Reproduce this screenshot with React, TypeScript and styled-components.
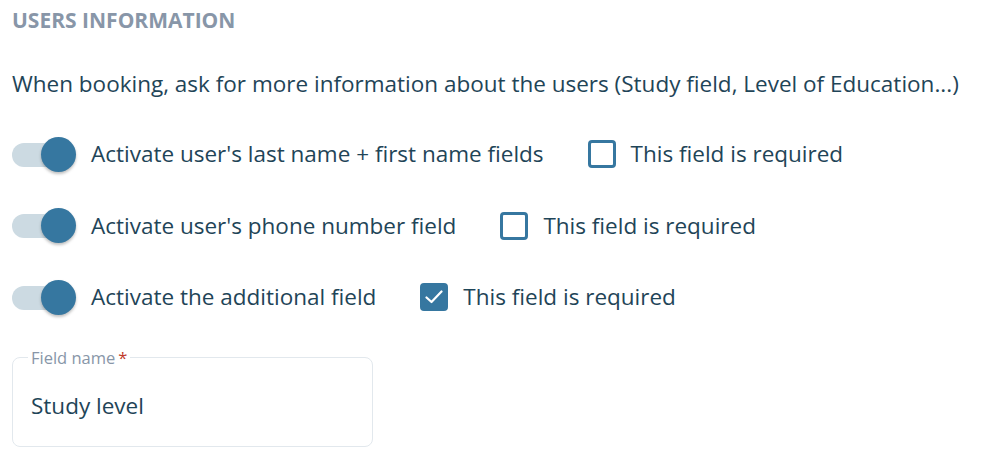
import React, { useState } from 'react';
import styled, { createGlobalStyle } from 'styled-components';

const TEXT = '#1f4558';
const MUTED = '#8896a8';
const BLUE = '#3677a0';
const TRACK = '#ccdae2';

const GlobalStyle = createGlobalStyle`
  body {
    margin: 0;
    background: #ffffff;
    font-family: 'Open Sans', 'Noto Sans', sans-serif;
    color: ${TEXT};
  }
`;

const Page = styled.div`
  display: flex;
  flex-direction: column;
  padding: 6px 12px;
`;

const Title = styled.h2`
  margin: 0;
  font-size: 21px;
  font-weight: 700;
  color: ${MUTED};
  line-height: 28px;
`;

const Description = styled.p`
  margin: 35px 0 0;
  font-size: 22.5px;
  line-height: 30px;
`;

const Options = styled.div`
  display: flex;
  flex-direction: column;
  gap: 36.5px;
  margin-top: 37.5px;
`;

const Row = styled.div`
  display: flex;
  align-items: center;
  height: 35px;
`;

const SwitchButton = styled.button<{ on: boolean }>`
  position: relative;
  width: 64px;
  height: 35px;
  padding: 0;
  border: none;
  background: none;
  cursor: pointer;
  flex-shrink: 0;
  &::before {
    content: '';
    position: absolute;
    left: 0;
    top: 6px;
    width: 58px;
    height: 24px;
    border-radius: 12px;
    background: ${TRACK};
  }
  &::after {
    content: '';
    position: absolute;
    top: 0;
    left: ${({ on }) => (on ? '29px' : '0')};
    width: 35px;
    height: 35px;
    border-radius: 50%;
    background: ${({ on }) => (on ? BLUE : '#f4f6f8')};
    box-shadow: 0 2px 3px rgba(0, 0, 0, 0.25);
  }
`;

const Label = styled.span<{ gap?: number }>`
  margin-left: ${({ gap }) => gap ?? 15}px;
  font-size: 22.5px;
  line-height: 30px;
`;

const Check = styled.span<{ checked: boolean }>`
  display: flex;
  align-items: center;
  justify-content: center;
  box-sizing: border-box;
  width: 28px;
  height: 28px;
  margin-left: 44px;
  border: 3px solid ${BLUE};
  border-radius: 4px;
  background: ${({ checked }) => (checked ? BLUE : '#fff')};
  cursor: pointer;
  flex-shrink: 0;
`;

const Field = styled.fieldset`
  box-sizing: border-box;
  width: 361px;
  height: 99px;
  margin: 33px 0 0;
  padding: 0 18px;
  border: 1px solid #e2e8ed;
  border-radius: 8px;
`;

const Legend = styled.legend`
  padding: 0 3px;
  margin-left: -3px;
  font-size: 16.5px;
  color: ${MUTED};
  line-height: 19px;
`;

const Required = styled.span`
  color: #c0392b;
  margin-left: 3px;
`;

const Input = styled.input`
  margin-top: 24px;
  width: 100%;
  border: none;
  outline: none;
  padding: 0;
  font-family: inherit;
  font-size: 22.5px;
  line-height: 30px;
  color: ${TEXT};
  background: transparent;
`;

const CheckMark = () => (
  <svg width="18" height="14" viewBox="0 0 18 14" fill="none">
    <path d="M1.5 7.5 L6.5 12 L16.5 1.5" stroke="#fff" strokeWidth="2.2" strokeLinecap="round" strokeLinejoin="round" />
  </svg>
);

interface Option {
  label: string;
  on: boolean;
  required: boolean;
}

const initial: Option[] = [
  { label: "Activate user's last name + first name fields", on: true, required: false },
  { label: "Activate user's phone number field", on: true, required: false },
  { label: 'Activate the additional field', on: true, required: true },
];

const App = (): JSX.Element => {
  const [options, setOptions] = useState(initial);

  const update = (i: number, patch: Partial<Option>) =>
    setOptions((prev) => prev.map((o, j) => (j === i ? { ...o, ...patch } : o)));

  return (
    <Page>
      <GlobalStyle />
      <Title>USERS INFORMATION</Title>
      <Description>
        When booking, ask for more information about the users (Study field, Level of Education...)
      </Description>
      <Options>
        {options.map((o, i) => (
          <Row key={o.label}>
            <SwitchButton on={o.on} onClick={() => update(i, { on: !o.on })} />
            <Label>{o.label}</Label>
            <Check checked={o.required} onClick={() => update(i, { required: !o.required })}>
              {o.required && <CheckMark />}
            </Check>
            <Label>This field is required</Label>
          </Row>
        ))}
      </Options>
      <Field>
        <Legend>
          Field name<Required>*</Required>
        </Legend>
        <Input defaultValue="Study level" />
      </Field>
    </Page>
  );
};

export default App;
